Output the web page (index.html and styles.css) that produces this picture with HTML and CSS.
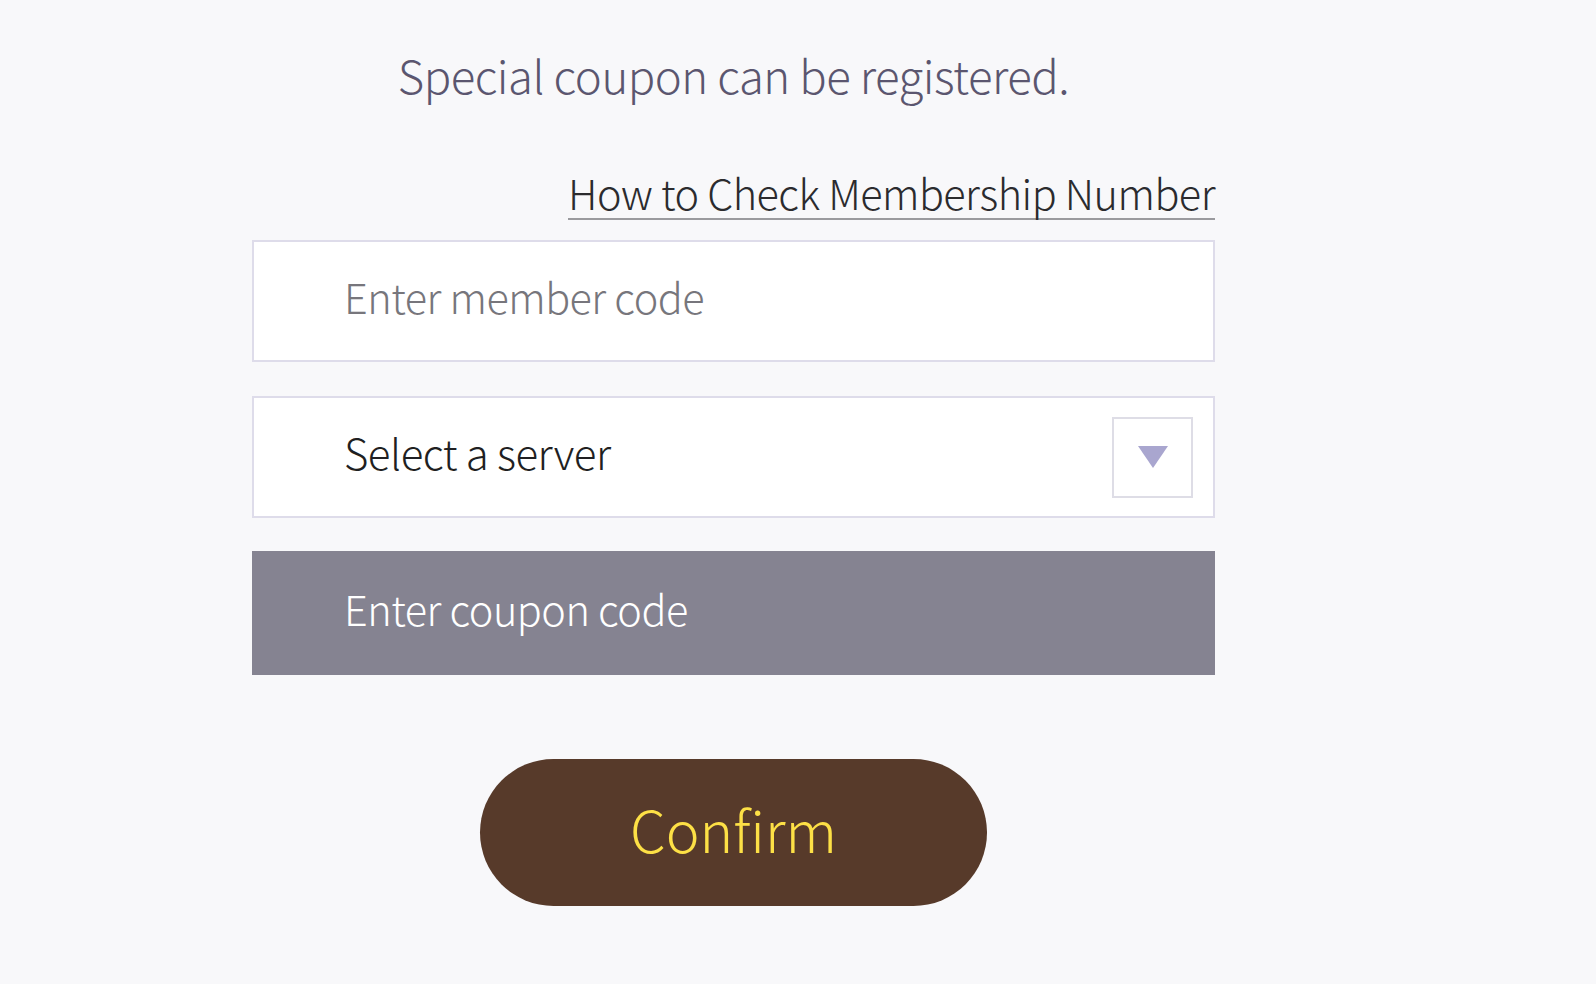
FILE: index.html
```html
<!DOCTYPE html>
<html lang="en">
<head>
<meta charset="utf-8">
<title>Coupon</title>
<link rel="stylesheet" href="styles.css">
</head>
<body>
<main class="coupon">
  <h1 class="coupon-title">Special coupon can be registered.</h1>
  <div class="help-row"><a class="help-link" href="#">How to Check Membership Number</a></div>
  <div class="field"><input class="field-input" type="text" placeholder="Enter member code"></div>
  <div class="field field-select">
    <span class="select-label">Select a server</span>
    <span class="select-arrow"><svg width="30" height="22" viewBox="0 0 30 22"><path d="M0 0H30L15 22Z" fill="#a9a6cf"/></svg></span>
  </div>
  <div class="field field-dark"><input class="field-input" type="text" placeholder="Enter coupon code"></div>
  <div class="actions"><button class="confirm" type="button">Confirm</button></div>
</main>
</body>
</html>
```
FILE: styles.css
```css
html, body {
  margin: 0;
  padding: 0;
  background: #f8f8fa;
}
body {
  font-family: "Noto Sans CJK KR", "Noto Sans", sans-serif;
  font-weight: 300;
}
.coupon {
  width: 963px;
  margin-left: 252px;
  padding-top: 44px;
}
.coupon-title {
  margin: 0;
  text-align: center;
  font-size: 45.5px;
  font-weight: 300;
  line-height: 60px;
  color: #5b566f;
  letter-spacing: -0.5px;
}
.help-row {
  display: flex;
  justify-content: flex-end;
  margin-top: 62px;
}
.help-link {
  font-size: 41.4px;
  line-height: 52px;
  color: #2b2b2e;
  text-decoration: none;
  border-bottom: 2px solid #9a9a9e;
  letter-spacing: -0.5px;
}
.field {
  box-sizing: border-box;
  height: 122px;
  border: 2px solid #dedcea;
  background: #fff;
  display: flex;
  align-items: center;
  margin-top: 20px;
}
.field-select {
  margin-top: 34px;
  justify-content: space-between;
  padding: 0 20px 0 90px;
}
.field-input {
  flex: 1;
  border: 0;
  outline: 0;
  background: transparent;
  padding: 0 0 11px 90px;
  font-family: inherit;
  font-weight: 300;
  font-size: 41.4px;
  color: #222;
  letter-spacing: -0.5px;
}
.field-input::placeholder {
  color: #77767c;
}
.select-label {
  font-size: 42px;
  color: #1f1f22;
  letter-spacing: -0.5px;
  padding-bottom: 11px;
}
.select-arrow {
  box-sizing: border-box;
  width: 81px;
  height: 81px;
  border: 2px solid #dedde6;
  display: flex;
  align-items: center;
  justify-content: center;
}
.field-dark {
  margin-top: 33px;
  height: 124px;
  background: #858391;
  border-color: #858391;
}
.field-dark .field-input::placeholder {
  color: #ffffff;
}
.actions {
  display: flex;
  justify-content: center;
  margin-top: 84px;
}
.confirm {
  width: 507px;
  height: 147px;
  border: 0;
  border-radius: 74px;
  background: #573a2a;
  color: #fde046;
  font-family: inherit;
  font-weight: 300;
  font-size: 57px;
  padding: 0 0 10px;
  cursor: pointer;
}
```
